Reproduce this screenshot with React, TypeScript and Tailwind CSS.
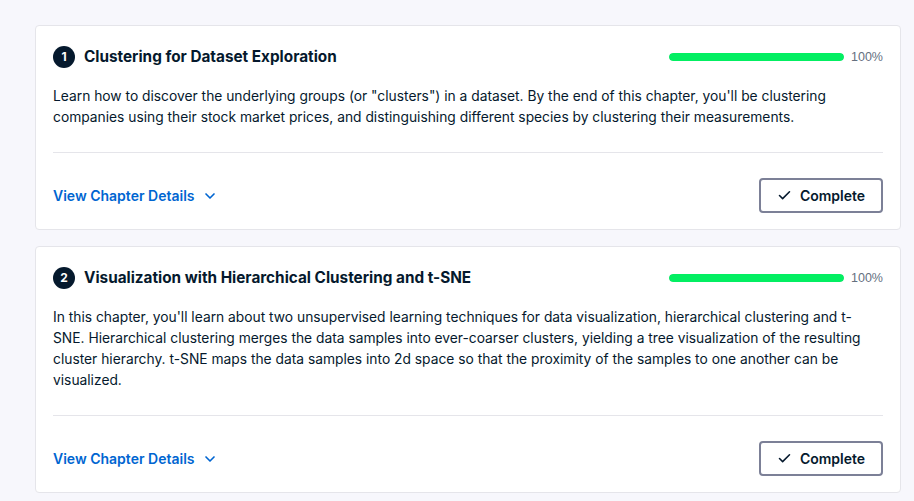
import { Check, ChevronDown } from 'lucide-react'

interface Chapter {
  num: number
  title: string
  description: string
  progress: number
}

const CHAPTERS: Chapter[] = [
  {
    num: 1,
    title: 'Clustering for Dataset Exploration',
    description:
      'Learn how to discover the underlying groups (or "clusters") in a dataset. By the end of this chapter, you\'ll be clustering companies using their stock market prices, and distinguishing different species by clustering their measurements.',
    progress: 100,
  },
  {
    num: 2,
    title: 'Visualization with Hierarchical Clustering and t-SNE',
    description:
      "In this chapter, you'll learn about two unsupervised learning techniques for data visualization, hierarchical clustering and t-SNE. Hierarchical clustering merges the data samples into ever-coarser clusters, yielding a tree visualization of the resulting cluster hierarchy. t-SNE maps the data samples into 2d space so that the proximity of the samples to one another can be visualized.",
    progress: 100,
  },
]

const ChapterCard = ({ chapter }: { chapter: Chapter }) => {
  return (
    <div className="bg-white border border-[#e5e5ea] rounded-[4px] px-[17px] pt-[20px] pb-[16px]">
      <div className="flex items-center h-[22px]">
        <div className="w-[22px] h-[22px] rounded-full bg-[#05192d] text-white flex items-center justify-center text-[12px] font-bold shrink-0">
          {chapter.num}
        </div>
        <h3 className="ml-[9px] text-[15.3px] font-bold text-[#05192d] flex-1">{chapter.title}</h3>
        <div className="w-[175px] h-[8px] rounded-full bg-[#e5e5ea] overflow-hidden">
          <div className="h-full bg-[#03ef62] rounded-full" style={{ width: `${chapter.progress}%` }} />
        </div>
        <span className="ml-[7px] text-[12.5px] text-[#65707f] w-[32px]" style={{ fontFamily: '"Liberation Sans", Arial, sans-serif' }}>
          {chapter.progress}%
        </span>
      </div>
      <p className="mt-[18px] text-[13.8px] leading-[21px] text-[#05192d]">{chapter.description}</p>
      <div className="mt-[24px] border-t border-[#e5e5ea]" />
      <div className="flex items-center justify-between pt-[25px]">
        <button className="flex items-center text-[#0065d1] text-[14px] font-semibold">
          View Chapter Details
          <ChevronDown className="ml-[8px] w-[16px] h-[16px]" strokeWidth={2.5} />
        </button>
        <button className="flex items-center justify-center w-[124px] h-[35px] border-2 border-[#7c8097] rounded-[4px] text-[14px] font-semibold text-[#05192d]">
          <Check className="w-[15px] h-[15px] mr-[8px]" strokeWidth={2.5} />
          Complete
        </button>
      </div>
    </div>
  )
}

export default function App() {
  return (
    <div className="min-h-screen bg-[#f7f7fc] pt-[25px]" style={{ fontFamily: 'Inter, "Noto Sans", sans-serif' }}>
      <div className="ml-[35px] w-[866px] flex flex-col gap-[16px]">
        {CHAPTERS.map((c) => (
          <ChapterCard key={c.num} chapter={c} />
        ))}
      </div>
    </div>
  )
}
